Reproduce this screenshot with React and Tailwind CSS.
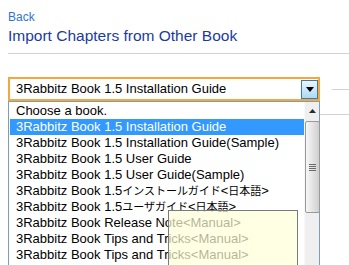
import React from 'react';

const books = [
  ['Choose a book.'],
  ['3Rabbitz Book 1.5 Installation Guide'],
  ['3Rabbitz Book 1.5 Installation Guide(Sample)'],
  ['3Rabbitz Book 1.5 User Guide'],
  ['3Rabbitz Book 1.5 User Guide(Sample)'],
  ['3Rabbitz Book 1.5', 'インストールガイド', '<', '日本語', '>'],
  ['3Rabbitz Book 1.5', 'ユーザガイド', '<', '日本語', '>'],
  ['3Rabbitz Book Release Note<Manual>'],
  ['3Rabbitz Book Tips and Tricks<Manual>'],
  ['3Rabbitz Book Tips and Tricks<Manual>'],
];

const selected = 1;

// japanese parts are on odd indexes
const Label = ({ parts }) => (
  <>
    {parts.map((p, i) =>
      i % 2 === 1 ? (
        <span key={i} className="text-[11px]">{p}</span>
      ) : (
        <span key={i}>{p}</span>
      )
    )}
  </>
);

export default function App() {
  return (
    <div
      className="relative w-[349px] h-[265px] overflow-hidden bg-white"
      style={{ fontFamily: '"Liberation Sans", Arial, "Noto Sans CJK JP", sans-serif' }}
    >
      <div className="pl-2 pt-[10px]">
        {/* header */}
        <a className="block text-[12px] leading-[14px] text-[#2f74d0]">Back</a>
        <h1 className="mt-[3px] text-[15.5px] leading-[18px] text-[#1b3b9e]">Import Chapters from Other Book</h1>
        <div className="mt-[8px] border-t border-[#d2d2d2]"></div>

        {/* select row */}
        <div className="mt-[23px] flex items-center">
          <div className="relative w-[312px] h-[24px] shrink-0">
            <div className="h-full border-2 border-[#f5a73c] flex items-center justify-between pl-[6px] bg-white">
              <span className="text-[13px] text-black whitespace-nowrap">
                <Label parts={books[selected]} />
              </span>
              <div className="w-[17px] h-[19px] mt-[1px] border border-[#3d7bad] bg-gradient-to-b from-[#eaf6fd] to-[#a9daf5] flex items-center justify-center">
                <svg width="8" height="5" viewBox="0 0 8 5">
                  <path d="M0 0h8L4 5z" fill="#000" />
                </svg>
              </div>
            </div>

            {/* dropdown list */}
            <div className="absolute left-0 top-[24px] w-[312px] h-[200px] border border-[#7f9db9] bg-white flex z-10">
              <div className="flex-1 pt-[1px] pl-[1px]">
                {books.map((b, i) => (
                  <div
                    key={i}
                    className={`h-[16px] leading-[16px] pl-[6px] text-[13px] whitespace-nowrap overflow-hidden ${
                      i === selected ? 'bg-[#3399ff] text-white' : 'text-black'
                    }`}
                  >
                    <Label parts={b} />
                  </div>
                ))}
              </div>

              {/* scrollbar */}
              <div className="w-[15px] bg-[#efefef] border-l border-[#f8f8f8] flex flex-col items-center">
                <div className="h-[18px] w-full flex items-center justify-center">
                  <svg width="7" height="4" viewBox="0 0 7 4">
                    <path d="M3.5 0L7 4H0z" fill="#2a2a2a" />
                  </svg>
                </div>
                <div className="mt-[1px] w-[15px] h-[92px] rounded-[2px] border border-[#9a9a9a] bg-gradient-to-r from-[#f6f6f6] via-[#e4e4e4] to-[#cfcfcf] flex flex-col items-center justify-center gap-[1px]">
                  <div className="w-[7px] h-[1px] bg-[#6a6a6a]"></div>
                  <div className="w-[7px] h-[1px] bg-[#6a6a6a]"></div>
                  <div className="w-[7px] h-[1px] bg-[#6a6a6a]"></div>
                  <div className="w-[7px] h-[1px] bg-[#6a6a6a]"></div>
                </div>
              </div>
            </div>

            {/* tooltip */}
            <div className="absolute left-[160px] top-[133px] w-[130px] h-[80px] border border-[#7a7a7a] bg-[#ffffd8]/70 z-20"></div>
          </div>
          <div className="ml-3 flex-1 border-t border-[#d2d2d2]"></div>
        </div>
        <div className="mt-[13px] border-t border-[#d2d2d2]"></div>
      </div>
    </div>
  );
}
